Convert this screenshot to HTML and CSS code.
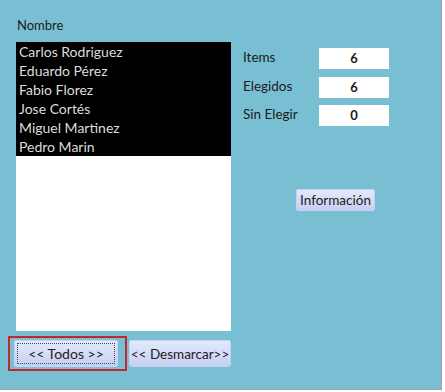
FILE: index.html
```html
<!DOCTYPE html>
<html lang="es">

<head>
    <meta charset="UTF-8">
    <meta name="viewport" content="width=device-width, initial-scale=1.0">
    <title>Formulario</title>
    <link rel="stylesheet" href="styles.css">
</head>

<body>
    <div class="form">
        <div class="left">
            <div class="caption">Nombre</div>
            <div class="listbox">
                <div class="item selected">Carlos Rodriguez</div>
                <div class="item selected">Eduardo Pérez</div>
                <div class="item selected">Fabio Florez</div>
                <div class="item selected">Jose Cortés</div>
                <div class="item selected">Miguel Martinez</div>
                <div class="item selected">Pedro Marin</div>
            </div>
            <div class="buttons">
                <div class="highlight">
                    <button class="btn focused"><span>&lt;&lt; Todos &gt;&gt;</span></button>
                </div>
                <button class="btn desmarcar">&lt;&lt; Desmarcar&gt;&gt;</button>
            </div>
        </div>
        <div class="right">
            <div class="stats">
                <label>Items</label>
                <div class="value">6</div>
                <label>Elegidos</label>
                <div class="value">6</div>
                <label>Sin Elegir</label>
                <div class="value">0</div>
            </div>
            <button class="btn info">Información</button>
        </div>
    </div>
</body>

</html>
```

FILE: styles.css
```css
* {
    margin: 0;
    padding: 0;
    box-sizing: border-box;
}

body {
    background-color: #ffffff;
    font-family: Lato, "Open Sans", sans-serif;
    font-size: 13px;
    color: #1b1b1b;
}

.form {
    width: 442px;
    height: 390px;
    display: flex;
    background-color: #79bfd3;
    border-right: 1px solid #9aa5a8;
    border-bottom: 1px solid #9aa5a8;
}

.left {
    width: 240px;
    padding-top: 14px;
    padding-left: 8px;
    display: flex;
    flex-direction: column;
}

.caption {
    height: 28px;
    padding-left: 9px;
    padding-top: 2px;
    line-height: 18px;
}

.listbox {
    margin-left: 8px;
    width: 215px;
    height: 289px;
    background-color: #ffffff;
}

.item {
    height: 19px;
    line-height: 19px;
    padding-left: 3px;
    font-size: 14px;
}

.item.selected {
    background-color: #000000;
    color: #dcdcdc;
}

.buttons {
    margin-top: 5px;
    display: flex;
    align-items: flex-start;
}

.highlight {
    border: 2px solid #c4272f;
    padding: 2px 7px 2px 4px;
}

.btn {
    font-family: inherit;
    font-size: 13px;
    color: #222222;
    background: linear-gradient(#e4e9fb, #c5cff3);
    border: 1px solid #c8d1ef;
    border-radius: 2px;
    cursor: pointer;
}

.btn.focused {
    width: 104px;
    height: 27px;
    padding: 2px;
    font-size: 14px;
}

.btn.focused span {
    display: block;
    height: 100%;
    line-height: 20px;
    border: 1px dotted #3a4a6a;
}

.desmarcar {
    width: 102px;
    height: 27px;
    margin-top: 4px;
    margin-left: 2px;
    font-size: 13.5px;
}

.right {
    padding-top: 48px;
    padding-left: 3px;
    display: flex;
    flex-direction: column;
}

.stats {
    display: grid;
    grid-template-columns: 76px 70px;
    grid-auto-rows: 21px;
    row-gap: 7.5px;
    align-items: center;
}

.stats label {
    font-size: 13.5px;
    margin-top: -3px;
}

.value {
    height: 21px;
    line-height: 21px;
    background-color: #ffffff;
    text-align: center;
    font-weight: bold;
}

.info {
    margin-top: 63px;
    margin-left: 53px;
    width: 79px;
    height: 22px;
    font-size: 13.5px;
}
```
